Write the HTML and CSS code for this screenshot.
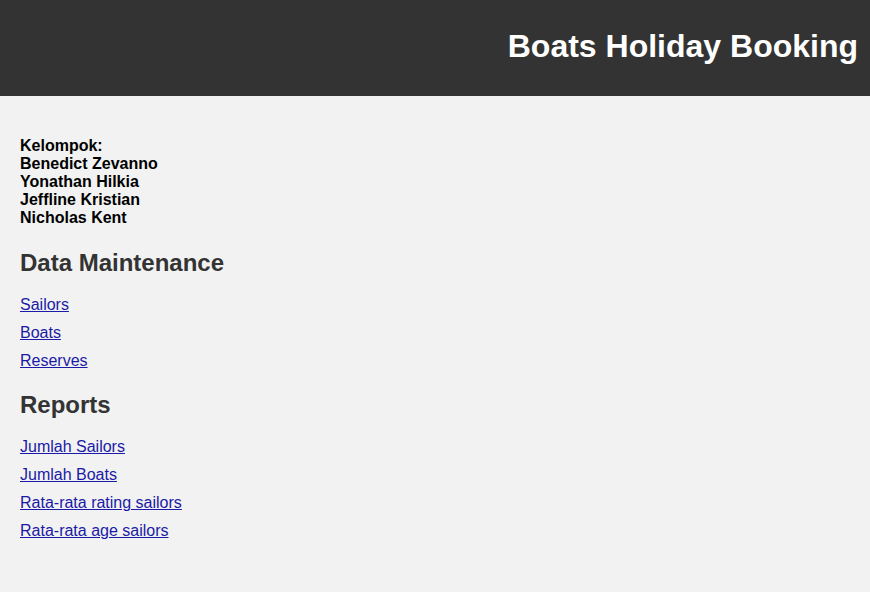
FILE: index.html
```html
<!DOCTYPE html>
<html>
<head>
<meta charset="utf-8">
<title>Boats Holiday Booking</title>
<link rel="stylesheet" href="styles.css">
</head>
<body>
<header class="topbar">
  <h1 class="title">Boats Holiday Booking</h1>
</header>
<main class="content">
  <div class="team">
    <div>Kelompok:</div>
    <div>Benedict Zevanno</div>
    <div>Yonathan Hilkia</div>
    <div>Jeffline Kristian</div>
    <div>Nicholas Kent</div>
  </div>
  <h2 class="section-title">Data Maintenance</h2>
  <nav class="links">
    <a href="#">Sailors</a>
    <a href="#">Boats</a>
    <a href="#">Reserves</a>
  </nav>
  <h2 class="section-title">Reports</h2>
  <nav class="links">
    <a href="#">Jumlah Sailors</a>
    <a href="#">Jumlah Boats</a>
    <a href="#">Rata-rata rating sailors</a>
    <a href="#">Rata-rata age sailors</a>
  </nav>
</main>
</body>
</html>
```
FILE: styles.css
```css
html, body {
  margin: 0;
  padding: 0;
  background: #f2f2f2;
  font-family: "Liberation Sans", Arial, sans-serif;
  font-size: 16px;
}
.topbar {
  background: #333333;
  height: 96px;
  display: flex;
  align-items: center;
  justify-content: flex-end;
  padding: 0 12px 4px;
  box-sizing: border-box;
}
.title {
  margin: 0;
  color: #ffffff;
  font-size: 32px;
  font-weight: bold;
  line-height: 36px;
}
.content {
  padding: 41px 20px 20px;
}
.team {
  font-weight: bold;
  line-height: 18px;
  color: #000;
}
.section-title {
  margin: 22px 0 19px;
  font-size: 24px;
  line-height: 28px;
  color: #333333;
  font-weight: bold;
}
.links {
  display: flex;
  flex-direction: column;
  align-items: flex-start;
  gap: 10px;
  line-height: 18px;
}
.links a {
  color: #1a1aa6;
  text-decoration: underline;
}
.links + .section-title {
  margin-top: 21px;
}
```
